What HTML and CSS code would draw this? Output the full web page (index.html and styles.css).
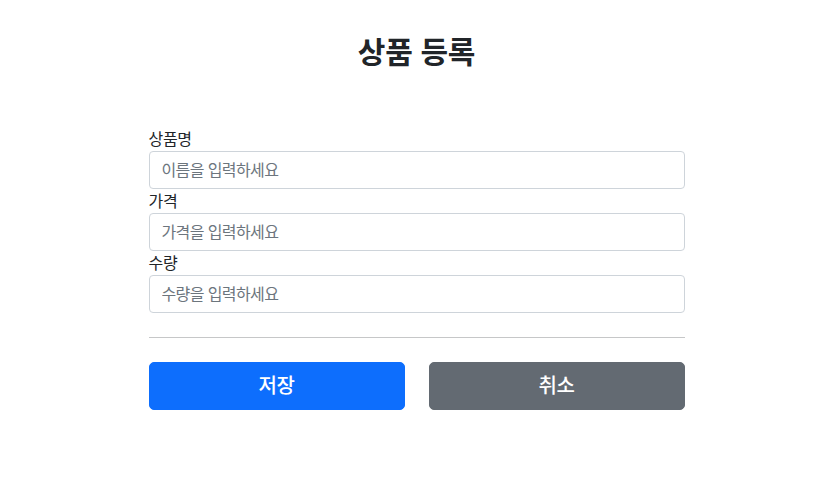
FILE: index.html
```html
<!DOCTYPE html>
<html lang="ko">
<head>
<meta charset="utf-8">
<title>상품 등록</title>
<link rel="stylesheet" href="styles.css">
</head>
<body>
<div class="container">
  <div class="header">
    <h2 class="title">상품 등록</h2>
  </div>
  <form class="form">
    <div class="field">
      <label class="label" for="itemName">상품명</label>
      <input class="input" type="text" id="itemName" placeholder="이름을 입력하세요">
    </div>
    <div class="field">
      <label class="label" for="price">가격</label>
      <input class="input" type="text" id="price" placeholder="가격을 입력하세요">
    </div>
    <div class="field">
      <label class="label" for="quantity">수량</label>
      <input class="input" type="text" id="quantity" placeholder="수량을 입력하세요">
    </div>
    <hr class="divider">
    <div class="actions">
      <button class="btn btn-primary" type="submit">저장</button>
      <button class="btn btn-secondary" type="button">취소</button>
    </div>
  </form>
</div>
</body>
</html>
```

FILE: styles.css
```css
* { box-sizing: border-box; }
html, body {
  margin: 0;
  padding: 0;
  background: #fff;
}
body {
  font-family: "Noto Sans CJK KR", "Noto Sans", "Liberation Sans", sans-serif;
  font-size: 16px;
  line-height: 1.5;
  color: #212529;
}
.container {
  max-width: 560px;
  margin: 0 auto;
  padding: 0 12px;
}
.header {
  padding: 31px 0 50px;
  text-align: center;
}
.title {
  margin: 0 0 8px;
  height: 38px;
  font-size: 30px;
  font-weight: 700;
  line-height: 38px;
  letter-spacing: -0.3px;
}
.form { margin: 0; }
.label {
  display: block;
  height: 24px;
  line-height: 23px;
  letter-spacing: -0.3px;
}
.input {
  display: block;
  width: 100%;
  height: 38px;
  padding: 5px 12px 7px;
  font-family: inherit;
  font-size: 16px;
  line-height: 1.5;
  letter-spacing: -0.6px;
  color: #212529;
  background: #fff;
  border: 1px solid #ced4da;
  border-radius: 4px;
  outline: none;
}
.input::placeholder { color: #6c757d; opacity: 1; }
.divider {
  margin: 24px 0;
  border: 0;
  border-top: 1px solid #c6c7c8;
  height: 0;
}
.actions {
  display: grid;
  grid-template-columns: 1fr 1fr;
  gap: 24px;
}
.btn {
  height: 48px;
  padding: 7px 16px 9px;
  font-family: inherit;
  font-size: 20px;
  font-weight: 500;
  line-height: 1.5;
  letter-spacing: -0.5px;
  color: #fff;
  border: 1px solid transparent;
  border-radius: 5px;
  cursor: pointer;
}
.btn-primary { background: #0d6efd; border-color: #0d6efd; }
.btn-secondary { background: #636a72; border-color: #636a72; }
```
